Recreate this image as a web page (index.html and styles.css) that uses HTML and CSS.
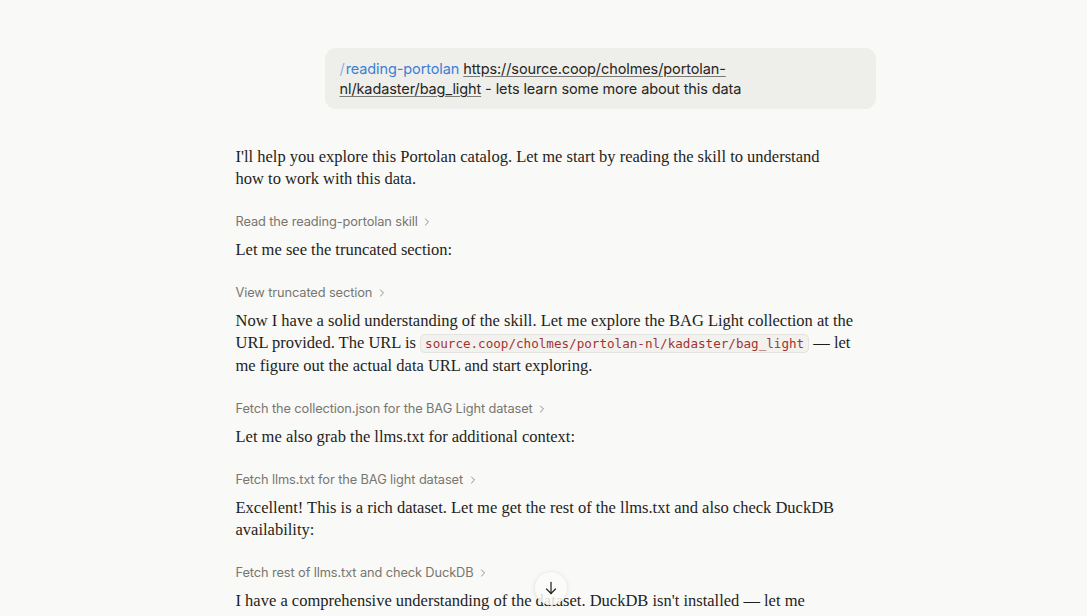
FILE: index.html
```html
<!DOCTYPE html>
<html lang="en">
<head>
<meta charset="utf-8">
<title>Portolan</title>
<link rel="stylesheet" href="styles.css">
</head>
<body>
<main class="thread">
  <div class="user-row">
    <div class="bubble"><span class="skill"><span class="slash">/</span>reading-portolan</span> <a class="link" href="#">https://source.coop/cholmes/portolan-nl/kadaster/bag_light</a> - lets learn some more about this data</div>
  </div>

  <p class="para first">I'll help you explore this Portolan catalog. Let me start by reading the skill to understand <span class="nw">how to</span> work with this data.</p>
  <div class="tool">Read the reading-portolan skill <svg class="chev" width="8" height="8" viewBox="0 0 8 8"><path d="M2.5 1l3 3-3 3" fill="none" stroke="#8d8c86" stroke-width="1" stroke-linecap="round" stroke-linejoin="round"/></svg></div>
  <p class="para">Let me see the truncated section:</p>
  <div class="tool">View truncated section <svg class="chev" width="8" height="8" viewBox="0 0 8 8"><path d="M2.5 1l3 3-3 3" fill="none" stroke="#8d8c86" stroke-width="1" stroke-linecap="round" stroke-linejoin="round"/></svg></div>
  <p class="para">Now I have a solid understanding of the skill. Let me explore the BAG Light collection at the URL provided. The URL is <code>source.coop/cholmes/portolan-nl/kadaster/bag_light</code> — let me figure out the actual data URL and start exploring.</p>
  <div class="tool">Fetch the collection.json for the BAG Light dataset <svg class="chev" width="8" height="8" viewBox="0 0 8 8"><path d="M2.5 1l3 3-3 3" fill="none" stroke="#8d8c86" stroke-width="1" stroke-linecap="round" stroke-linejoin="round"/></svg></div>
  <p class="para">Let me also grab the llms.txt for additional context:</p>
  <div class="tool">Fetch llms.txt for the BAG light dataset <svg class="chev" width="8" height="8" viewBox="0 0 8 8"><path d="M2.5 1l3 3-3 3" fill="none" stroke="#8d8c86" stroke-width="1" stroke-linecap="round" stroke-linejoin="round"/></svg></div>
  <p class="para">Excellent! This is a rich dataset. Let me get the rest of the llms.txt and also check DuckDB availability:</p>
  <div class="tool">Fetch rest of llms.txt and check DuckDB <svg class="chev" width="8" height="8" viewBox="0 0 8 8"><path d="M2.5 1l3 3-3 3" fill="none" stroke="#8d8c86" stroke-width="1" stroke-linecap="round" stroke-linejoin="round"/></svg></div>
  <p class="para">I have a comprehensive understanding of the dataset. DuckDB isn't installed — let me</p>
</main>
<button class="scroll-btn" aria-label="Scroll to bottom">
  <svg width="16" height="16" viewBox="0 0 16 16" fill="none" stroke="#2a2925" stroke-width="1.3" stroke-linecap="round" stroke-linejoin="round"><path d="M8 2.5v11"/><path d="M3.5 9l4.5 4.5L12.5 9"/></svg>
</button>
</body>
</html>
```
FILE: styles.css
```css
html, body {
  margin: 0;
  padding: 0;
  background: #f9f9f7;
  overflow: hidden;
  height: 100%;
}
body {
  color: #1f1e1c;
  font-family: "Liberation Serif", "DejaVu Serif", serif;
}
.thread {
  width: 640px;
  margin: 0 auto;
  padding: 48px 0 0 24px;
  display: flex;
  flex-direction: column;
}
.user-row {
  display: flex;
  justify-content: flex-end;
}
.bubble {
  max-width: 520px;
  background: #eeeeeb;
  border-radius: 11px;
  padding: 11px 16px 10px 15px;
  font-family: "Inter", "Noto Sans", sans-serif;
  font-size: 14.5px;
  line-height: 20px;
  color: #262522;
  letter-spacing: -0.1px;
}
.skill { color: #3c7fd6; }
.slash { color: #8db4e8; margin-right: 1px; }
.link {
  color: #262522;
  text-decoration: underline;
  text-decoration-color: #7a7975;
  text-underline-offset: 2px;
}
.para {
  margin: 7px 0 0;
  padding-right: 20px;
  font-size: 16.5px;
  line-height: 22px;
}
.para.first { margin-top: 37px; }
.nw { white-space: nowrap; }
.tool {
  margin-top: 22px;
  font-family: "Inter", "Noto Sans", sans-serif;
  font-size: 12.8px;
  line-height: 20px;
  color: #77766f;
  letter-spacing: -0.1px;
}
.chev {
  margin-left: 2px;
  vertical-align: 0px;
}
code {
  font-family: "DejaVu Sans Mono", "Liberation Mono", monospace;
  font-size: 12.6px;
  color: #a13430;
  background: #f2f1ee;
  border: 1px solid #e4e3df;
  border-radius: 5px;
  padding: 1px 4px;
}
.scroll-btn {
  position: fixed;
  left: 534px;
  top: 571px;
  width: 34px;
  height: 34px;
  border-radius: 50%;
  border: 1px solid #ecebe7;
  background: rgba(252, 252, 250, 0.85);
  box-shadow: 0 1px 4px rgba(0,0,0,0.08);
  display: flex;
  align-items: center;
  justify-content: center;
  padding: 0;
}
```
